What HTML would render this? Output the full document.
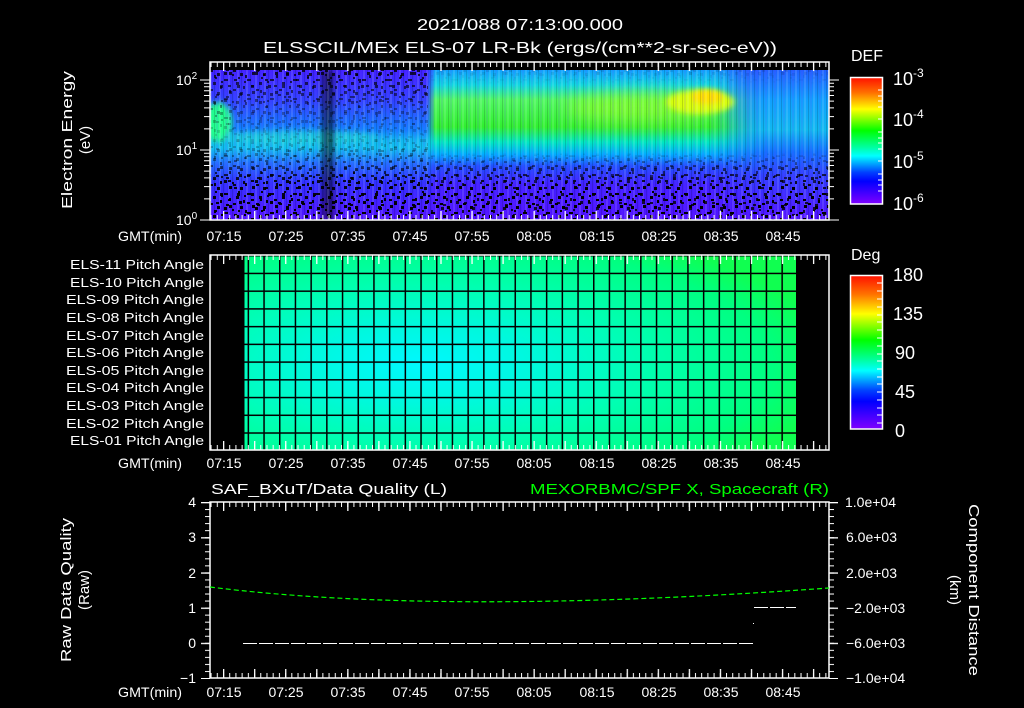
<!DOCTYPE html>
<html><head><meta charset="utf-8"><style>
html,body{margin:0;padding:0;background:#000;width:1024px;height:708px;overflow:hidden}
svg{display:block}
text{font-family:"Liberation Sans",sans-serif;fill:#fff}
</style></head><body>
<svg width="1024" height="708" viewBox="0 0 1024 708" xmlns="http://www.w3.org/2000/svg">
<defs>
<pattern id="mt" x="223" y="0" width="6.21" height="708" patternUnits="userSpaceOnUse"><rect width="1" height="708" fill="#fff"/></pattern>
<pattern id="Mt" x="223" y="0" width="31.05" height="708" patternUnits="userSpaceOnUse"><rect width="1.3" height="708" fill="#fff"/></pattern>
<pattern id="ym" x="0" y="502" width="1024" height="7.04" patternUnits="userSpaceOnUse"><rect width="1024" height="1" fill="#fff"/></pattern>
<pattern id="yM" x="0" y="502" width="1024" height="35.2" patternUnits="userSpaceOnUse"><rect width="1024" height="1.3" fill="#fff"/></pattern>
<pattern id="grid" x="263.3" y="272.7" width="15.7" height="17.73" patternUnits="userSpaceOnUse"><rect width="1.5" height="17.73" fill="#000"/><rect width="15.7" height="1.5" fill="#000"/></pattern>
<pattern id="spA" x="210" y="70" width="23" height="19" patternUnits="userSpaceOnUse">
<rect x="0" y="0" width="3" height="2"/><rect x="7" y="3" width="3" height="3"/><rect x="14" y="9" width="4" height="2"/><rect x="3" y="12" width="3" height="3"/><rect x="18" y="15" width="3" height="2"/><rect x="10" y="16" width="2" height="3"/><rect x="19" y="2" width="3" height="3"/><rect x="5" y="7" width="2" height="2"/><rect x="11" y="11" width="2" height="2"/></pattern>
<pattern id="spB" x="212" y="71" width="31" height="27" patternUnits="userSpaceOnUse">
<rect x="2" y="4" width="2" height="3"/><rect x="12" y="1" width="3" height="3"/><rect x="22" y="8" width="3" height="2"/><rect x="8" y="14" width="3" height="3"/><rect x="17" y="19" width="2" height="3"/><rect x="27" y="22" width="3" height="3"/><rect x="4" y="23" width="3" height="2"/><rect x="25" y="14" width="3" height="3"/><rect x="14" y="25" width="3" height="2"/><rect x="20" y="3" width="2" height="2"/></pattern>
<pattern id="vs" x="210" y="0" width="9" height="10" patternUnits="userSpaceOnUse">
<rect x="0" width="2" height="10" fill="#fff" opacity="0.12"/><rect x="4" width="1" height="10" fill="#000" opacity="0.15"/><rect x="6" width="2" height="10" fill="#8040ff" opacity="0.12"/></pattern>
<linearGradient id="rb" x1="0" y1="0" x2="0" y2="1">
<stop offset="0" stop-color="#ff1000"/><stop offset="0.12" stop-color="#ff7000"/><stop offset="0.25" stop-color="#ffff00"/><stop offset="0.42" stop-color="#00ff00"/><stop offset="0.55" stop-color="#00ffa0"/><stop offset="0.62" stop-color="#00ffff"/><stop offset="0.75" stop-color="#0040ff"/><stop offset="0.82" stop-color="#0000ff"/><stop offset="1" stop-color="#8000ff"/></linearGradient>
<linearGradient id="gA" x1="0" y1="70" x2="0" y2="220" gradientUnits="userSpaceOnUse">
<stop offset="0" stop-color="#4020ff"/><stop offset="0.2" stop-color="#3040ff"/><stop offset="0.4" stop-color="#1080ff"/><stop offset="0.47" stop-color="#10b8f0"/><stop offset="0.52" stop-color="#10c0f0"/><stop offset="0.62" stop-color="#2070ff"/><stop offset="0.75" stop-color="#3030ff"/><stop offset="1" stop-color="#5010ff"/></linearGradient>
<linearGradient id="gB" x1="0" y1="70" x2="0" y2="220" gradientUnits="userSpaceOnUse">
<stop offset="0" stop-color="#10a0ff"/><stop offset="0.1" stop-color="#10d8e0"/><stop offset="0.2" stop-color="#50f860"/><stop offset="0.38" stop-color="#30f030"/><stop offset="0.48" stop-color="#00e8c0"/><stop offset="0.56" stop-color="#00b0ff"/><stop offset="0.64" stop-color="#2050ff"/><stop offset="0.76" stop-color="#4020ff"/><stop offset="1" stop-color="#5010ff"/></linearGradient>
<linearGradient id="gC" x1="0" y1="70" x2="0" y2="220" gradientUnits="userSpaceOnUse">
<stop offset="0" stop-color="#2060ff"/><stop offset="0.2" stop-color="#10a0ff"/><stop offset="0.4" stop-color="#10b8f0"/><stop offset="0.55" stop-color="#1070ff"/><stop offset="0.7" stop-color="#3040ff"/><stop offset="1" stop-color="#5010ff"/></linearGradient>
<linearGradient id="fx" x1="427" y1="0" x2="829" y2="0" gradientUnits="userSpaceOnUse">
<stop offset="0" stop-color="#fff" stop-opacity="0"/><stop offset="0.02" stop-color="#fff"/><stop offset="0.74" stop-color="#fff"/><stop offset="0.86" stop-color="#fff" stop-opacity="0"/></linearGradient>
<linearGradient id="fx2" x1="710" y1="0" x2="765" y2="0" gradientUnits="userSpaceOnUse">
<stop offset="0" stop-color="#fff" stop-opacity="0"/><stop offset="1" stop-color="#fff"/></linearGradient>
<mask id="mB"><rect x="420" y="62" width="420" height="160" fill="url(#fx)"/></mask>
<mask id="mC"><rect x="700" y="62" width="129" height="160" fill="url(#fx2)"/></mask>
<filter id="bl" x="-50%" y="-50%" width="200%" height="200%"><feGaussianBlur stdDeviation="8"/></filter>
<filter id="bl2" x="-50%" y="-50%" width="200%" height="200%"><feGaussianBlur stdDeviation="3"/></filter>
<linearGradient id="mk" x1="0" y1="70" x2="0" y2="220" gradientUnits="userSpaceOnUse">
<stop offset="0" stop-color="#fff" stop-opacity="0.8"/><stop offset="0.3" stop-color="#fff" stop-opacity="0.3"/><stop offset="0.45" stop-color="#fff" stop-opacity="0.1"/><stop offset="0.6" stop-color="#fff" stop-opacity="0.4"/><stop offset="0.75" stop-color="#fff" stop-opacity="0.9"/><stop offset="1" stop-color="#fff" stop-opacity="1"/></linearGradient>
<linearGradient id="mk2" x1="0" y1="70" x2="0" y2="220" gradientUnits="userSpaceOnUse"><stop offset="0" stop-color="#fff" stop-opacity="0.1"/><stop offset="0.1" stop-color="#fff" stop-opacity="0"/><stop offset="0.55" stop-color="#fff" stop-opacity="0"/><stop offset="0.66" stop-color="#fff" stop-opacity="0.6"/><stop offset="0.8" stop-color="#fff" stop-opacity="1"/></linearGradient>
<mask id="m1"><rect x="210" y="62" width="218" height="160" fill="url(#mk)"/><rect x="428" y="62" width="401" height="160" fill="url(#mk2)"/></mask>
<mask id="m2"><rect x="210" y="62" width="218" height="160" fill="url(#mk)"/><rect x="428" y="62" width="401" height="160" fill="url(#mk2)" opacity="0.8"/></mask>
<radialGradient id="pg" cx="0.32" cy="0.56" r="0.75">
<stop offset="0" stop-color="#00f8ff"/><stop offset="0.25" stop-color="#00f8e0"/><stop offset="0.55" stop-color="#00ffb0"/><stop offset="0.85" stop-color="#00ff80"/><stop offset="1" stop-color="#10ff50"/></radialGradient>
<clipPath id="sc"><rect x="210" y="70" width="619" height="150"/></clipPath>
</defs>

<text x="520" y="30" font-size="16" text-anchor="middle" textLength="206" lengthAdjust="spacingAndGlyphs">2021/088 07:13:00.000</text>
<text x="520" y="53" font-size="16" text-anchor="middle" textLength="514" lengthAdjust="spacingAndGlyphs">ELSSCIL/MEx ELS-07 LR-Bk  (ergs/(cm**2-sr-sec-eV))</text>

<g clip-path="url(#sc)">
<rect x="210" y="70" width="619" height="150" fill="url(#gA)"/>
<rect x="420" y="70" width="409" height="150" fill="url(#gB)" mask="url(#mB)"/>
<rect x="700" y="70" width="129" height="150" fill="url(#gC)" mask="url(#mC)"/>
<ellipse cx="218" cy="122" rx="14" ry="20" fill="#20ff90" filter="url(#bl2)"/>
<ellipse cx="300" cy="137" rx="80" ry="7" fill="#20e0d0" opacity="0.55" filter="url(#bl2)"/>
<ellipse cx="640" cy="108" rx="75" ry="14" fill="#90ff20" opacity="0.7" filter="url(#bl)"/>
<ellipse cx="700" cy="102" rx="34" ry="12" fill="#d8ff10" filter="url(#bl2)"/>
<ellipse cx="707" cy="97" rx="16" ry="7" fill="#ffe000" filter="url(#bl2)"/>
<rect x="322" y="70" width="12" height="150" fill="#000" opacity="0.55" filter="url(#bl2)"/>
<rect x="210" y="62" width="619" height="160" fill="url(#vs)"/>
<rect x="210" y="62" width="619" height="160" fill="url(#spA)" mask="url(#m1)"/>
<rect x="210" y="62" width="619" height="160" fill="url(#spB)" mask="url(#m2)"/>
</g>
<rect x="210" y="62" width="619" height="158" fill="none" stroke="#fff" stroke-width="1.5"/>
<rect x="210" y="62" width="619" height="5" fill="url(#mt)"/>
<rect x="210" y="62" width="619" height="9" fill="url(#Mt)"/>
<rect x="210" y="215" width="619" height="5" fill="url(#mt)"/>
<rect x="210" y="211" width="619" height="9" fill="url(#Mt)"/>
<g stroke="#fff" stroke-width="1">
<path d="M200 220H210M204 198.9H210M204 186.6H210M204 177.9H210M204 171.1H210M204 165.5H210M204 160.8H210M204 156.8H210M204 153.2H210M200 150H210M204 128.9H210M204 116.6H210M204 107.9H210M204 101.1H210M204 95.5H210M204 90.8H210M204 86.8H210M204 83.2H210M200 80H210"/>
<path d="M829 220H839M829 198.9H834M829 186.6H834M829 177.9H834M829 171.1H834M829 165.5H834M829 160.8H834M829 156.8H834M829 153.2H834M829 150H839M829 128.9H834M829 116.6H834M829 107.9H834M829 101.1H834M829 95.5H834M829 90.8H834M829 86.8H834M829 83.2H834M829 80H839"/>
</g>
<text x="176" y="225" font-size="14">10<tspan font-size="10" dy="-6">0</tspan></text>
<text x="176" y="155" font-size="14">10<tspan font-size="10" dy="-6">1</tspan></text>
<text x="176" y="85" font-size="14">10<tspan font-size="10" dy="-6">2</tspan></text>
<text transform="translate(72,140) rotate(-90)" font-size="15" text-anchor="middle" textLength="138" lengthAdjust="spacingAndGlyphs">Electron Energy</text>
<text transform="translate(90,140) rotate(-90)" font-size="15" text-anchor="middle">(eV)</text>

<text x="851" y="61" font-size="16">DEF</text>
<rect x="850.5" y="77.5" width="32" height="126.5" fill="url(#rb)" stroke="#fff" stroke-width="1.5"/>
<g stroke="#fff"><path d="M878 107H882M878 101H882M878 96H882M878 90H882M878 119H882M878 149H882M878 143H882M878 138H882M878 132H882M878 161H882M878 191H882M878 185H882M878 180H882M878 174H882"/></g>
<text x="893" y="85" font-size="18">10<tspan font-size="12" dy="-8">-3</tspan></text>
<text x="893" y="126" font-size="18">10<tspan font-size="12" dy="-8">-4</tspan></text>
<text x="893" y="168" font-size="18">10<tspan font-size="12" dy="-8">-5</tspan></text>
<text x="893" y="210" font-size="18">10<tspan font-size="12" dy="-8">-6</tspan></text>

<g font-size="14" text-anchor="middle">
<text x="118" y="241" textLength="64" lengthAdjust="spacingAndGlyphs" text-anchor="start">GMT(min)</text>
<text x="224" y="241">07:15</text><text x="286" y="241">07:25</text><text x="348" y="241">07:35</text><text x="410" y="241">07:45</text><text x="472" y="241">07:55</text><text x="534" y="241">08:05</text><text x="597" y="241">08:15</text><text x="659" y="241">08:25</text><text x="721" y="241">08:35</text><text x="783" y="241">08:45</text>
<text x="118" y="468" textLength="64" lengthAdjust="spacingAndGlyphs" text-anchor="start">GMT(min)</text>
<text x="224" y="468">07:15</text><text x="286" y="468">07:25</text><text x="348" y="468">07:35</text><text x="410" y="468">07:45</text><text x="472" y="468">07:55</text><text x="534" y="468">08:05</text><text x="597" y="468">08:15</text><text x="659" y="468">08:25</text><text x="721" y="468">08:35</text><text x="783" y="468">08:45</text>
<text x="118" y="697" textLength="64" lengthAdjust="spacingAndGlyphs" text-anchor="start">GMT(min)</text>
<text x="224" y="697">07:15</text><text x="286" y="697">07:25</text><text x="348" y="697">07:35</text><text x="410" y="697">07:45</text><text x="472" y="697">07:55</text><text x="534" y="697">08:05</text><text x="597" y="697">08:15</text><text x="659" y="697">08:25</text><text x="721" y="697">08:35</text><text x="783" y="697">08:45</text>
</g>

<rect x="243" y="255" width="553" height="195" fill="url(#pg)"/>
<rect x="243" y="255" width="553" height="195" fill="url(#grid)"/>
<rect x="243" y="255" width="1.5" height="195" fill="#000"/>
<rect x="210" y="255" width="619" height="5" fill="url(#mt)"/>
<rect x="210" y="255" width="619" height="9" fill="url(#Mt)"/>
<rect x="210" y="445" width="619" height="5" fill="url(#mt)"/>
<rect x="210" y="441" width="619" height="9" fill="url(#Mt)"/>
<rect x="210" y="255" width="619" height="195" fill="none" stroke="#fff" stroke-width="1.5"/>
<g font-size="13" text-anchor="end">
<text x="204" y="269" textLength="134" lengthAdjust="spacingAndGlyphs">ELS-11 Pitch Angle</text>
<text x="204" y="287" textLength="134" lengthAdjust="spacingAndGlyphs">ELS-10 Pitch Angle</text>
<text x="204" y="304" textLength="138" lengthAdjust="spacingAndGlyphs">ELS-09 Pitch Angle</text>
<text x="204" y="322" textLength="138" lengthAdjust="spacingAndGlyphs">ELS-08 Pitch Angle</text>
<text x="204" y="340" textLength="138" lengthAdjust="spacingAndGlyphs">ELS-07 Pitch Angle</text>
<text x="204" y="357" textLength="138" lengthAdjust="spacingAndGlyphs">ELS-06 Pitch Angle</text>
<text x="204" y="375" textLength="138" lengthAdjust="spacingAndGlyphs">ELS-05 Pitch Angle</text>
<text x="204" y="392" textLength="138" lengthAdjust="spacingAndGlyphs">ELS-04 Pitch Angle</text>
<text x="204" y="410" textLength="138" lengthAdjust="spacingAndGlyphs">ELS-03 Pitch Angle</text>
<text x="204" y="428" textLength="138" lengthAdjust="spacingAndGlyphs">ELS-02 Pitch Angle</text>
<text x="204" y="445" textLength="134" lengthAdjust="spacingAndGlyphs">ELS-01 Pitch Angle</text>
</g>
<text x="851" y="260" font-size="16">Deg</text>
<rect x="850.5" y="275.5" width="32" height="153.5" fill="url(#rb)" stroke="#fff" stroke-width="1.5"/>
<g stroke="#fff"><path d="M877 283H882M877 291H882M877 299H882M877 307H882M877 315H882M877 322H882M877 330H882M877 338H882M877 346H882M877 354H882M877 361H882M877 369H882M877 377H882M877 384H882M877 392H882M877 400H882M877 408H882M877 415H882M877 423H882"/></g>
<g font-size="18"><text x="893" y="281">180</text><text x="893" y="320">135</text><text x="895" y="359">90</text><text x="895" y="398">45</text><text x="895" y="437">0</text></g>

<text x="211" y="494" font-size="15" textLength="236" lengthAdjust="spacingAndGlyphs">SAF_BXuT/Data Quality (L)</text>
<text x="829" y="494" font-size="15" text-anchor="end" style="fill:#00ff00" textLength="299" lengthAdjust="spacingAndGlyphs">MEXORBMC/SPF X, Spacecraft (R)</text>
<rect x="210" y="502" width="619" height="5" fill="url(#mt)"/>
<rect x="210" y="502" width="619" height="9" fill="url(#Mt)"/>
<rect x="210" y="673" width="619" height="5" fill="url(#mt)"/>
<rect x="210" y="669" width="619" height="9" fill="url(#Mt)"/>
<rect x="205" y="502" width="5" height="177" fill="url(#ym)"/>
<rect x="201" y="502" width="9" height="177" fill="url(#yM)"/>
<rect x="829" y="502" width="5" height="177" fill="url(#ym)"/>
<rect x="829" y="502" width="9" height="177" fill="url(#yM)"/>
<rect x="210" y="502" width="619" height="176" fill="none" stroke="#fff" stroke-width="1.5"/>
<path d="M210 587 Q440 616 829 588" fill="none" stroke="#00ff00" stroke-width="1.2" stroke-dasharray="5 3"/>
<path d="M243 643.5H753" stroke="#fff" stroke-width="1" stroke-dasharray="14 2"/>
<path d="M754 607.5H796" stroke="#fff" stroke-width="1" stroke-dasharray="14 2"/>
<rect x="753" y="623" width="1" height="1" fill="#fff"/>
<g font-size="14" text-anchor="end"><text x="196" y="507">4</text><text x="196" y="542">3</text><text x="196" y="578">2</text><text x="196" y="613">1</text><text x="196" y="648">0</text><text x="196" y="683">−1</text></g>
<g font-size="14"><text x="845" y="507">1.0e+04</text><text x="846" y="542">6.0e+03</text><text x="846" y="578">2.0e+03</text><text x="846" y="613">−2.0e+03</text><text x="846" y="648">−6.0e+03</text><text x="846" y="683">−1.0e+04</text></g>
<text transform="translate(71,590) rotate(-90)" font-size="15" text-anchor="middle" textLength="144" lengthAdjust="spacingAndGlyphs">Raw Data Quality</text>
<text transform="translate(89,590) rotate(-90)" font-size="15" text-anchor="middle">(Raw)</text>
<text transform="translate(969,590) rotate(90)" font-size="15" text-anchor="middle" textLength="172" lengthAdjust="spacingAndGlyphs">Component Distance</text>
<text transform="translate(950,590) rotate(90)" font-size="15" text-anchor="middle">(km)</text>
</svg>
</body></html>
